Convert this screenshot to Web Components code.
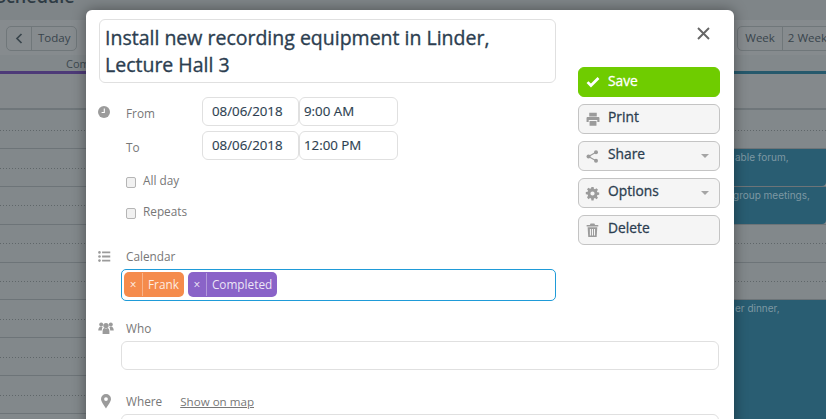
<!DOCTYPE html>
<html>
<head>
<meta charset="utf-8">
<style>
  html, body { margin: 0; padding: 0; height: 419px; overflow: hidden; background: #82888b; }
  body { font-family: "Open Sans", "Liberation Sans", sans-serif; position: relative; }
</style>
</head>
<body>
<schedule-page>
  <event-dialog>
    <span slot="title">Install new recording equipment in Linder, Lecture Hall 3</span>
  </event-dialog>
</schedule-page>

<script>
const ICONS = {
  clock: '<circle cx="7" cy="7" r="6"/><path d="M7.3 3.600v3.900H4.600" fill="none" stroke="#fff" stroke-width="1.100"/>',
  list: '<circle cx="1.600" cy="2.600" r="1.400"/><circle cx="1.600" cy="7" r="1.400"/><circle cx="1.600" cy="11.400" r="1.400"/><path d="M4.400 1.600h8.800v2H4.400zM4.400 6h8.800v2H4.400zM4.400 10.400h8.800v2H4.400z"/>',
  group: '<circle cx="3.200" cy="3.600" r="2"/><circle cx="12.800" cy="3.600" r="2"/><circle cx="8" cy="4.600" r="2.700"/><path d="M.2 10c0-3 1.200-4.600 2.800-4.600.7 0 1.200.2 1.700.7-.6.9-.9 2-.9 3.400H.2zM15.800 10c0-3-1.200-4.600-2.800-4.600-.7 0-1.200.2-1.700.7.6.9.9 2 .9 3.400h3.600zM4.600 13V10c0-2 1.200-3 2-3 .4.400.9.600 1.400.600s1-.2 1.400-.6c.8 0 2 1 2 3v3z"/>',
  pin: '<path fill-rule="evenodd" d="M5 0a5 5 0 0 1 5 5c0 2.400-3 6.400-5 9.400C3 11.400 0 7.400 0 5a5 5 0 0 1 5-5zm0 3.200a1.900 1.900 0 1 0 0 3.800 1.900 1.900 0 0 0 0-3.800z"/>',
  check: '<path d="M1.400 6.600l3.200 3.200L11.600 2.800" fill="none" stroke="#fff" stroke-width="2.500"/>',
  print: '<path d="M3 .8h7v3.400H3zM1.500 4.700h10c.6 0 1 .4 1 1V9.400h-2V7.500h-8v1.900H.5V5.700c0-.6.4-1 1-1zM3.300 8.300h6.400v4.400H3.300z"/>',
  share: '<circle cx="2.500" cy="6.500" r="2"/><circle cx="10" cy="2.200" r="2"/><circle cx="10" cy="10.800" r="2"/><path d="M2.500 6.500L10 2.200M2.500 6.500L10 10.800" fill="none" stroke="currentColor" stroke-width="1.100"/>',
  gear: '<path fill-rule="evenodd" d="M5.400 0h2.200l.3 1.800 1.100.5L10.500 1.200l1.500 1.500-1.100 1.500.5 1.100 1.800.3v2.200l-1.800.3-.5 1.100 1.100 1.500-1.500 1.500-1.500-1.100-1.100.5-.3 1.800H5.400l-.3-1.800-1.100-.5-1.500 1.100L1 10.200l1.100-1.500-.5-1.100L-.2 7.300V5.100l1.800-.3.5-1.100L1 2.200l1.500-1.500L4 1.800l1.100-.5zM6.500 4.400a2.100 2.100 0 1 0 0 4.200 2.100 2.100 0 0 0 0-4.200z"/>',
  trash: '<path fill-rule="evenodd" d="M4.200 .5h3.600l.6 1.300h3v1.400H.6V1.800h3zM1.500 4h9l-.6 9H2.100zM3.600 5.500v6h1v-6zM5.500 5.500v6h1v-6zM7.400 5.500v6h1v-6z"/>',
  close: '<path d="M1 1l11 11M12 1L1 12" fill="none" stroke="currentColor" stroke-width="1.900"/>'
};

class UiIcon extends HTMLElement {
  connectedCallback() {
    const size = this.getAttribute("size") || 14;
    const box = this.getAttribute("box") || "0 0 14 14";
    this.attachShadow({mode: "open"}).innerHTML = `
      <style>
        :host { display: inline-flex; flex: none; color: var(--icon-color, #9b9b9b); }
        svg { display: block; fill: currentColor; overflow: visible; }
      </style>
      <svg width="${size}" height="${size}" viewBox="${box}">${ICONS[this.getAttribute("name")]}</svg>`;
  }
}
customElements.define("ui-icon", UiIcon);

class SchedEvent extends HTMLElement {
  connectedCallback() {
    this.attachShadow({mode: "open"}).innerHTML = `
      <style>
        :host {
          position: absolute; left: 700px; right: 0; box-sizing: border-box;
          background: #295d72; color: #7d98a3; border-radius: 0 0 4px 0;
          font: 10px/14px Inter, Roboto, sans-serif; padding: 1px 0 0 var(--text-left, 35px);
        }
      </style>
      <slot></slot>`;
  }
}
customElements.define("sched-event", SchedEvent);

class SchedulePage extends HTMLElement {
  connectedCallback() {
    const rows = Array.from({length: 7}, () => '<div class="row"></div>').join("");
    this.attachShadow({mode: "open"}).innerHTML = `
      <style>
        :host { display: block; position: relative; width: 826px; height: 419px; overflow: hidden; color: #37434b; }
        .title { height: 20px; margin: 0; font-size: 18px; font-weight: 600; line-height: 0; color: #2e3b44; background: #7f8588; white-space: nowrap; overflow: hidden; text-indent: -4px; }
        .title span { display: block; margin-top: -4px; }
        .toolbar { display: flex; justify-content: space-between; height: 35px; padding-top: 6px; box-sizing: border-box; background: #868b8e; }
        .group { display: flex; height: 23px; border: 1px solid #70777a; border-radius: 5px; font-size: 11.500px; line-height: 22px; }
        .group.left { margin-left: 6px; }
        .group.right { margin-right: -9px; border-radius: 5px 0 0 5px; }
        .group span { padding: 0 6px; border-left: 1px solid #70777a; color: #38444c; }
        .group span:first-child { border-left: 0; }
        .group.right span { padding: 0 7px; }
        .group.right span + span { padding-left: 5px; }
        .chev { width: 12px; display: flex; align-items: center; justify-content: center; }
        .heads { display: flex; height: 16px; font-size: 11px; line-height: 18px; color: #3d494f; }
        .head { flex: 1; }
        .head.a { padding-left: 66px; }
        .head.b { padding-left: 301px; }
        .bands { display: flex; height: 2.500px; }
        .bands i { flex: 1; background: #4d3a78; }
        .bands i + i { background: #26596c; }
        .allday { box-sizing: border-box; height: 36px; border-bottom: 2px solid #6f767a; background: #84898c; }
        .row { box-sizing: border-box; height: 37.860px; border-bottom: 1px solid #6d7478;
               background: linear-gradient(to right, #5f6669 1px, transparent 1px) 0 18.500px / 3px 1px repeat-x; }
        .row.first { height: 39.500px; background-position: 0 20.500px; }
      </style>
      <div class="title"><span>Schedule</span></div>
      <div class="toolbar">
        <div class="group left">
          <span class="chev"><svg width="8" height="11" viewBox="0 0 8 11"><path d="M6.500 1L2 5.500l4.500 4.500" fill="none" stroke="#39454c" stroke-width="1.700"/></svg></span>
          <span>Today</span>
        </div>
        <div class="group right">
          <span>Week</span>
          <span>2 Week</span>
        </div>
      </div>
      <div class="heads"><div class="head a">Completed</div><div class="head b">Frank</div></div>
      <div class="bands"><i></i><i></i></div>
      <div class="allday"></div>
      <div class="row first"></div>
      ${rows}
      <sched-event style="top:149px;height:37px;--text-left:35px">able forum,</sched-event>
      <sched-event style="top:187px;height:37px;--text-left:33px">group meetings,</sched-event>
      <sched-event style="top:300px;height:130px;--text-left:35px;border-radius:0">er dinner,</sched-event>
      <slot></slot>`;
  }
}
customElements.define("schedule-page", SchedulePage);

class FieldInput extends HTMLElement {
  connectedCallback() {
    this.attachShadow({mode: "open"}).innerHTML = `
      <style>
        :host {
          display: block; box-sizing: border-box; background: #fff;
          border: 1px solid #e0e0e0; border-radius: 6px;
          color: #2c3e50; font-size: 13.300px; line-height: 27px; padding: 0 var(--field-pad, 9px); white-space: nowrap;
          -webkit-text-stroke: .15px #2c3e50;
        }
      </style>
      <slot></slot>`;
  }
}
customElements.define("field-input", FieldInput);

class ColorTag extends HTMLElement {
  connectedCallback() {
    this.attachShadow({mode: "open"}).innerHTML = `
      <style>
        :host {
          display: flex; align-items: center; height: 25px; border-radius: 5px;
          background: var(--tag-color); color: rgba(255,255,255,.85);
          font-size: 11.800px; line-height: 25px;
        }
        .x { width: 18px; text-align: center; height: 23px; line-height: 22px; border-right: 1px solid rgba(255,255,255,.35); }
        .name { padding: 0 5px; }
      </style>
      <span class="x">×</span><span class="name"><slot></slot></span>`;
  }
}
customElements.define("color-tag", ColorTag);

class ActionButton extends HTMLElement {
  connectedCallback() {
    const primary = this.hasAttribute("primary");
    const caret = this.hasAttribute("caret");
    this.attachShadow({mode: "open"}).innerHTML = `
      <style>
        :host {
          display: flex; align-items: center; box-sizing: border-box; height: 30px; padding: 0 10px 0 7px;
          border-radius: 6px; border: 1px solid ${primary ? "#6fcc00" : "#c4c4c4"};
          background: ${primary ? "#6fcc00" : "#f5f5f5"};
          color: ${primary ? "#fff" : "#2c3e50"}; font-size: 13.800px; line-height: 24px;
          -webkit-text-stroke: .3px ${primary ? "#fff" : "#2c3e50"};
          --icon-color: #9b9b9b;
        }
        .icon { width: 22px; display: flex; }
        .label { flex: 1; padding-bottom: ${primary ? 2 : 4}px; }
        .caret { width: 0; height: 0; border: 4.500px solid transparent; border-top: 4.500px solid #a5a5a5; border-bottom: 0; }
      </style>
      <span class="icon"><slot name="icon"></slot></span>
      <span class="label"><slot></slot></span>
      ${caret ? '<span class="caret"></span>' : ''}`;
  }
}
customElements.define("action-button", ActionButton);

class EventDialog extends HTMLElement {
  connectedCallback() {
    this.attachShadow({mode: "open"}).innerHTML = `
      <style>
        :host {
          position: absolute; left: 86px; top: 10px; width: 648px; height: 440px; box-sizing: border-box;
          background: #fff; border-radius: 6px; box-shadow: 0 0 14px rgba(0,0,0,.4);
          padding: 9px 14px 0 13px; color: #777;
          font-size: 11.800px;
        }
        .close { position: absolute; left: 611px; top: 17px; --icon-color: #666; }
        .top { display: flex; gap: 22px; }
        .main { width: 457px; flex: none; }
        .side { width: 142px; flex: none; padding-top: 48px; display: flex; flex-direction: column; gap: 7px; }
        .title { box-sizing: border-box; height: 64px; border: 1px solid #e0e0e0; border-radius: 6px; padding: 4px 5px; color: #2c3e50; font-size: 19.500px; line-height: 27px; -webkit-text-stroke: .35px #2c3e50; }
        .when { display: grid; grid-template-columns: 27px 76px 99px 99px; grid-auto-rows: 29px; row-gap: 5px; margin-top: 14px; margin-left: -2px; align-items: center; }
        .when .lab { line-height: 16px; padding-top: 2px; padding-left: 2px; }
        .time { --field-pad: 4px; }
        .check { display: flex; align-items: center; gap: 7px; margin-left: 27px; height: 16px; }
        .check i { display: block; box-sizing: border-box; width: 10px; height: 11px; margin-top: 4px; border: 1px solid #b5b5b5; border-radius: 2px; background: #f1f1f1; }
        .check.first { margin-top: 12px; }
        .check + .check { margin-top: 15px; }
        .row-head { display: flex; align-items: center; height: 16px; }
        .row-head .ic { width: 27px; display: flex; }
        .row-head .ic.pull { width: 28px; margin-left: -1px; }
        .tags { display: flex; gap: 4px; box-sizing: border-box; height: 32px; margin: 5px 0 0 22px; padding: 2px; border: 1.500px solid #1f9bd8; border-radius: 5px; background: #fff; }
        .who { margin-top: 19px; }
        .box { height: 29px; margin: 5px 1px 0 22px; }
        .where { margin-top: 23px; }
        a { margin-left: 18px; color: #777; font-size: 11.600px; text-decoration: underline; }
      </style>
      <ui-icon class="close" name="close" size="13" box="0 0 13 13"></ui-icon>
      <div class="top">
        <div class="main">
          <div class="title"><slot name="title"></slot></div>
          <div class="when">
            <ui-icon name="clock" size="14"></ui-icon><span class="lab">From</span>
            <field-input style="margin-left:2px">08/06/2018</field-input><field-input class="time">9:00 AM</field-input>
            <span></span><span class="lab">To</span>
            <field-input style="margin-left:2px">08/06/2018</field-input><field-input class="time">12:00 PM</field-input>
          </div>
          <div class="check first"><i></i><span>All day</span></div>
          <div class="check"><i></i><span>Repeats</span></div>
          <div class="row-head" style="margin-top:29px"><span class="ic pull"><ui-icon name="list" size="13"></ui-icon></span><span>Calendar</span></div>
          <div class="tags">
            <color-tag style="--tag-color:#f58b4c">Frank</color-tag>
            <color-tag style="--tag-color:#8a63c8">Completed</color-tag>
          </div>
        </div>
        <div class="side">
          <action-button primary><ui-icon slot="icon" name="check" size="14" box="0 0 13 13" style="--icon-color:#fff"></ui-icon>Save</action-button>
          <action-button><ui-icon slot="icon" name="print" size="14" box="0 0 13 13"></ui-icon>Print</action-button>
          <action-button caret><ui-icon slot="icon" name="share" size="13" box="0 0 13 13"></ui-icon>Share</action-button>
          <action-button caret><ui-icon slot="icon" name="gear" size="13" box="0 0 13 13"></ui-icon>Options</action-button>
          <action-button><ui-icon slot="icon" name="trash" size="14" box="0 0 13 13"></ui-icon>Delete</action-button>
        </div>
      </div>
      <div class="row-head who"><span class="ic pull"><ui-icon name="group" size="16" box="0 0 16 14"></ui-icon></span><span>Who</span></div>
      <field-input class="box"></field-input>
      <div class="row-head where"><span class="ic"><ui-icon name="pin" size="14" box="0 0 10 14"></ui-icon></span><span>Where</span><a>Show on map</a></div>
      <field-input class="box"></field-input>`;
  }
}
customElements.define("event-dialog", EventDialog);
</script>
</body>
</html>
